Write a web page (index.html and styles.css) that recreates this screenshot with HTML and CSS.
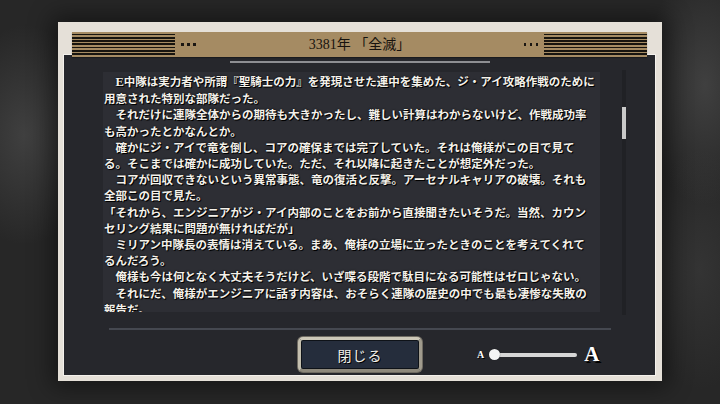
FILE: index.html
```
<!DOCTYPE html>
<html lang="ja">
<head>
<meta charset="utf-8">
<title>3381年 「全滅」</title>
<link rel="stylesheet" href="styles.css">
</head>
<body>
<div class="frame">
  <div class="header">
    <div class="stripes"></div>
    <div class="dots"><i></i><i></i><i></i></div>
    <div class="title"><span class="num">3381</span>年 「全滅」</div>
    <div class="dots"><i></i><i></i><i></i></div>
    <div class="stripes"></div>
  </div>
  <div class="panel">
    <div class="top-rule"></div>
    <div class="body-row">
      <div class="text">
        <p>　<span class="lat">E</span>中隊は実力者や所謂『聖騎士の力』を発現させた連中を集めた、ジ・アイ攻略作戦のために</p>
        <p>用意された特別な部隊だった。</p>
        <p>　それだけに連隊全体からの期待も大きかったし、難しい計算はわからないけど、作戦成功率</p>
        <p>も高かったとかなんとか。</p>
        <p>　確かにジ・アイで竜を倒し、コアの確保までは完了していた。それは俺様がこの目で見て</p>
        <p>る。そこまでは確かに成功していた。ただ、それ以降に起きたことが想定外だった。</p>
        <p>　コアが回収できないという異常事態、竜の復活と反撃。アーセナルキャリアの破壊。それも</p>
        <p>全部この目で見た。</p>
        <p>「それから、エンジニアがジ・アイ内部のことをお前から直接聞きたいそうだ。当然、カウン</p>
        <p>セリング結果に問題が無ければだが」</p>
        <p>　ミリアン中隊長の表情は消えている。まあ、俺様の立場に立ったときのことを考えてくれて</p>
        <p>るんだろう。</p>
        <p>　俺様も今は何となく大丈夫そうだけど、いざ喋る段階で駄目になる可能性はゼロじゃない。</p>
        <p>　それにだ、俺様がエンジニアに話す内容は、おそらく連隊の歴史の中でも最も凄惨な失敗の</p>
        <p>報告だ。</p>
      </div>
      <div class="scroll"><div class="thumb"></div></div>
    </div>
    <div class="sep"></div>
    <div class="controls">
      <button class="close" type="button">閉じる</button>
      <div class="size">
        <span class="a-small">A</span>
        <div class="track"><span class="line"></span><span class="knob"></span></div>
        <span class="a-big">A</span>
      </div>
    </div>
  </div>
</div>
</body>
</html>
```

FILE: styles.css
```
* { box-sizing: border-box; }
html, body { margin: 0; }
body {
  width: 720px;
  height: 404px;
  overflow: hidden;
  padding: 22px 58px 23px;
  background:
    radial-gradient(ellipse 70px 110px at 25px 135px, rgba(110,110,110,.35), rgba(0,0,0,0)),
    radial-gradient(ellipse 60px 120px at 705px 85px, rgba(110,110,110,.35), rgba(0,0,0,0)),
    radial-gradient(ellipse 60px 120px at 700px 270px, rgba(90,90,90,.25), rgba(0,0,0,0)),
    #272727;
  font-family: "Noto Sans CJK JP", sans-serif;
}
.frame {
  height: 359px;
  background: #e5e0d8;
  padding: 10px 6px 5px 5px;
  display: flex;
  flex-direction: column;
  box-shadow: 0 0 22px 6px rgba(0,0,0,.45);
}
.header {
  height: 25px;
  margin: 0 9px -3px 9px;
  display: flex;
  align-items: center;
  background: #a58b63;
  position: relative;
  z-index: 1;
  box-shadow: 0 1px 1px rgba(0,0,0,.3);
}
.stripes {
  width: 103px;
  align-self: stretch;
  background: repeating-linear-gradient(to bottom, rgba(0,0,0,0) 0 1.6px, #17140f 1.6px 3.3px);
}
.dots {
  display: flex;
  gap: 3.5px;
  margin: 0 6px;
}
.dots i {
  width: 2.5px;
  height: 2.5px;
  background: #1a1612;
}
.title {
  flex: 1;
  text-align: center;
  font-family: "Liberation Serif", "Noto Sans CJK JP", serif;
  font-size: 14px;
  color: #17130e;
  line-height: 25px;
}
.panel {
  flex: 1;
  background: #26272c;
  border: 1px solid #f4f1ec;
  display: flex;
  flex-direction: column;
}
.top-rule {
  width: 260px;
  height: 2px;
  margin: 6px auto 0;
  background: #8d8e92;
}
.body-row {
  display: flex;
  align-items: flex-start;
  height: 240px;
  margin-top: 9px;
  padding-left: 39px;
}
.text {
  width: 497px;
  height: 240px;
  overflow: hidden;
  background: #2d2e34;
  padding: 1px 0 0 1px;
  font-size: 11.5px;
  font-weight: 700;
  line-height: 16.2px;
  color: #f4f1ea;
  text-shadow: 1px 1px 0 #000, 0 0 2px #000;
}
.text p {
  margin: 0;
  white-space: nowrap;
}
.lat {
  font-family: "Liberation Serif", serif;
  font-size: 12.5px;
}
.scroll {
  width: 4px;
  height: 245px;
  margin: -2px 0 0 22px;
  background: #202125;
  padding-top: 37px;
}
.thumb {
  height: 32px;
  background: #c9c9c9;
}
.sep {
  width: 502px;
  height: 2px;
  margin: 16px 0 0 45px;
  background: #454850;
}
.controls {
  display: flex;
  align-items: center;
  height: 35px;
  margin-top: 7px;
  padding-left: 234px;
}
.close {
  width: 124px;
  height: 35px;
  padding: 0;
  border: 3px solid;
  border-color: #cdc8b8 #a09b8d #8e897c #c4bfaf;
  border-radius: 5px;
  background: #252d3c;
  box-shadow: inset 0 0 0 1px #0e1218, 0 0 0 1px #6f6b62;
  color: #f2f0ea;
  font-family: "Noto Sans CJK JP", sans-serif;
  font-size: 14px;
  text-shadow: 1px 1px 0 #000;
  letter-spacing: 1px;
}
.size {
  display: flex;
  align-items: center;
  margin-left: 55px;
}
.a-small {
  font-family: "Liberation Serif", serif;
  font-weight: 700;
  font-size: 10px;
  color: #fff;
  text-shadow: 1px 1px 0 #000;
}
.track {
  position: relative;
  width: 89px;
  height: 11px;
  margin-left: 5px;
  display: flex;
  align-items: center;
}
.line {
  display: block;
  width: 83px;
  height: 4px;
  margin-left: 5px;
  border-radius: 2px;
  background: #d6d6d6;
}
.knob {
  position: absolute;
  left: 0;
  top: 0;
  width: 11px;
  height: 11px;
  border-radius: 50%;
  background: #f4f4f4;
  box-shadow: 0 0 1px rgba(0,0,0,.6);
}
.a-big {
  margin-left: 6px;
  font-family: "Liberation Serif", serif;
  font-weight: 700;
  font-size: 21px;
  line-height: 21px;
  color: #fff;
  text-shadow: 2px 2px 0 #000;
}
```
